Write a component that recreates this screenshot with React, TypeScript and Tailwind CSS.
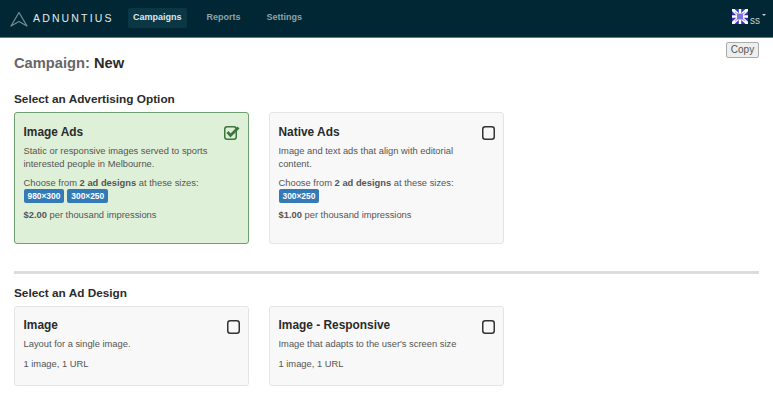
import type { ReactNode } from "react"

function Logo() {
  return (
    <div className="flex items-center gap-[5px] w-[101px]">
      <svg width="18" height="16" viewBox="0 0 18 16" fill="none" className="shrink-0">
        <path d="M9 1.5 L1 15 L9 10.5 L17 15 Z" stroke="#6f8b90" strokeWidth="1.3" strokeLinejoin="round" />
      </svg>
      <span className="text-[10.5px] tracking-[2.15px] text-[#e4ebec] whitespace-nowrap">ADNUNTIUS</span>
    </div>
  )
}

function Flag() {
  return (
    <svg width="16" height="15" viewBox="0 0 16 15" className="mb-[4px]">
      <rect width="16" height="15" fill="#3a2fc0" />
      <path d="M0 0 L16 15 M16 0 L0 15" stroke="#fff" strokeWidth="3.4" />
      <path d="M8 0 V15 M0 7.5 H16" stroke="#fff" strokeWidth="2.4" />
      <path d="M3 3 L13 12 M13 3 L3 12" stroke="#b9b3ee" strokeWidth="1.4" />
      <rect x="5" y="4.5" width="6" height="6" fill="#7d74d8" />
    </svg>
  )
}

function Header() {
  return (
    <header className="h-[38px] bg-[#002733] border-b border-[#5d7a82] flex items-center pl-[10px] pr-[7px]">
      <Logo />
      <nav className="flex items-center ml-[17px] mb-[2px] text-[9px] font-bold">
        <a className="h-[20px] px-[5px] flex items-center rounded-[2px] bg-[#0b3644] text-[#dfe8ea]">Campaigns</a>
        <a className="ml-[20px] text-[#8ea3a8]">Reports</a>
        <a className="ml-[26px] text-[#8ea3a8]">Settings</a>
      </nav>
      <div className="ml-auto flex items-center">
        <Flag />
        <span className="text-[10px] leading-none text-[#c5d2d5] ml-[2px] mt-[5px]">ss</span>
        <span className="ml-[2px] mb-[8px] border-x-[2px] border-t-[2px] border-x-transparent border-t-[#c5d2d5]" />
      </div>
    </header>
  )
}

function Checkbox({ checked }: { checked?: boolean }) {
  const color = checked ? "#3c763d" : "#333"
  return (
    <svg width={checked ? 16 : 14} height="14" viewBox={checked ? "0 0 16 14" : "0 0 14 14"} fill="none">
      <rect x="0.75" y="0.75" width="11.5" height="12.5" rx="2.5" stroke={color} strokeWidth="1.5" />
      {checked && <path d="M3.5 6 L6.5 9.5 L14.5 1.5" stroke={color} strokeWidth="2.8" />}
    </svg>
  )
}

function Size({ children }: { children: ReactNode }) {
  return (
    <span className="inline-flex items-center h-[14px] px-[4px] rounded-[2px] bg-[#337ab7] text-white text-[8.4px] font-bold">
      {children}
    </span>
  )
}

function Card({
  title,
  selected,
  tall,
  children,
}: {
  title: string
  selected?: boolean
  tall?: boolean
  children: ReactNode
}) {
  return (
    <div
      className={`relative w-[235px] rounded-[3px] border px-[8.5px] ${tall ? "h-[132px] pt-[10px]" : "h-[80px] pt-[9px]"} ${
        selected ? "bg-[#dff0d8] border-[#6f9f70]" : "bg-[#f8f8f8] border-[#e4e4e4]"
      }`}
    >
      <div className="text-[11.9px] leading-[18px] font-bold text-[#2b2b2b]">{title}</div>
      <div className={`absolute top-[13px] flex ${selected ? "right-[8px]" : "right-[7px]"}`}>
        <Checkbox checked={selected} />
      </div>
      <div className="text-[9.35px] leading-[13px] text-[#555] mt-[4px] w-[200px]">{children}</div>
    </div>
  )
}

function Sizes({ items }: { items: string[] }) {
  return (
    <div className="flex gap-[3px] mt-[-1px]">
      {items.map((s) => (
        <Size key={s}>{s}</Size>
      ))}
    </div>
  )
}

export default function App() {
  return (
    <div className="relative w-[773px] h-[403px] overflow-hidden bg-white font-['Liberation_Sans',Arial,sans-serif] text-[#333]">
      <Header />
      <button className="absolute right-[14px] top-[42px] h-[16px] w-[33px] rounded-[2px] border border-[#aaa] bg-[#eee] text-[10px] leading-none text-[#555]">
        Copy
      </button>
      <main className="px-[14px]">
        <h1 className="text-[14.7px] leading-[18px] font-bold text-[#666] mt-[16px]">
          Campaign: <span className="text-[#2b2b2b]">New</span>
        </h1>
        <h2 className="text-[11.8px] leading-[14px] font-bold text-[#2b2b2b] mt-[20px]">Select an Advertising Option</h2>
        <div className="flex gap-[20px] mt-[6px]">
          <Card title="Image Ads" selected tall>
            <p>Static or responsive images served to sports interested people in Melbourne.</p>
            <p className="mt-[6px]">
              Choose from <b>2 ad designs</b> at these sizes:
            </p>
            <Sizes items={["980×300", "300×250"]} />
            <p className="mt-[6px]">
              <b>$2.00</b> per thousand impressions
            </p>
          </Card>
          <Card title="Native Ads" tall>
            <p>Image and text ads that align with editorial content.</p>
            <p className="mt-[6px]">
              Choose from <b>2 ad designs</b> at these sizes:
            </p>
            <Sizes items={["300×250"]} />
            <p className="mt-[6px]">
              <b>$1.00</b> per thousand impressions
            </p>
          </Card>
        </div>
        <hr className="border-0 h-[3px] bg-[#dcdcdc] mt-[27px]" />
        <h2 className="text-[11.8px] leading-[14px] font-bold text-[#2b2b2b] mt-[12px]">Select an Ad Design</h2>
        <div className="flex gap-[20px] mt-[6px]">
          <Card title="Image">
            <p>Layout for a single image.</p>
            <p className="mt-[7px]">1 image, 1 URL</p>
          </Card>
          <Card title="Image - Responsive">
            <p>Image that adapts to the user's screen size</p>
            <p className="mt-[7px]">1 image, 1 URL</p>
          </Card>
        </div>
      </main>
    </div>
  )
}
